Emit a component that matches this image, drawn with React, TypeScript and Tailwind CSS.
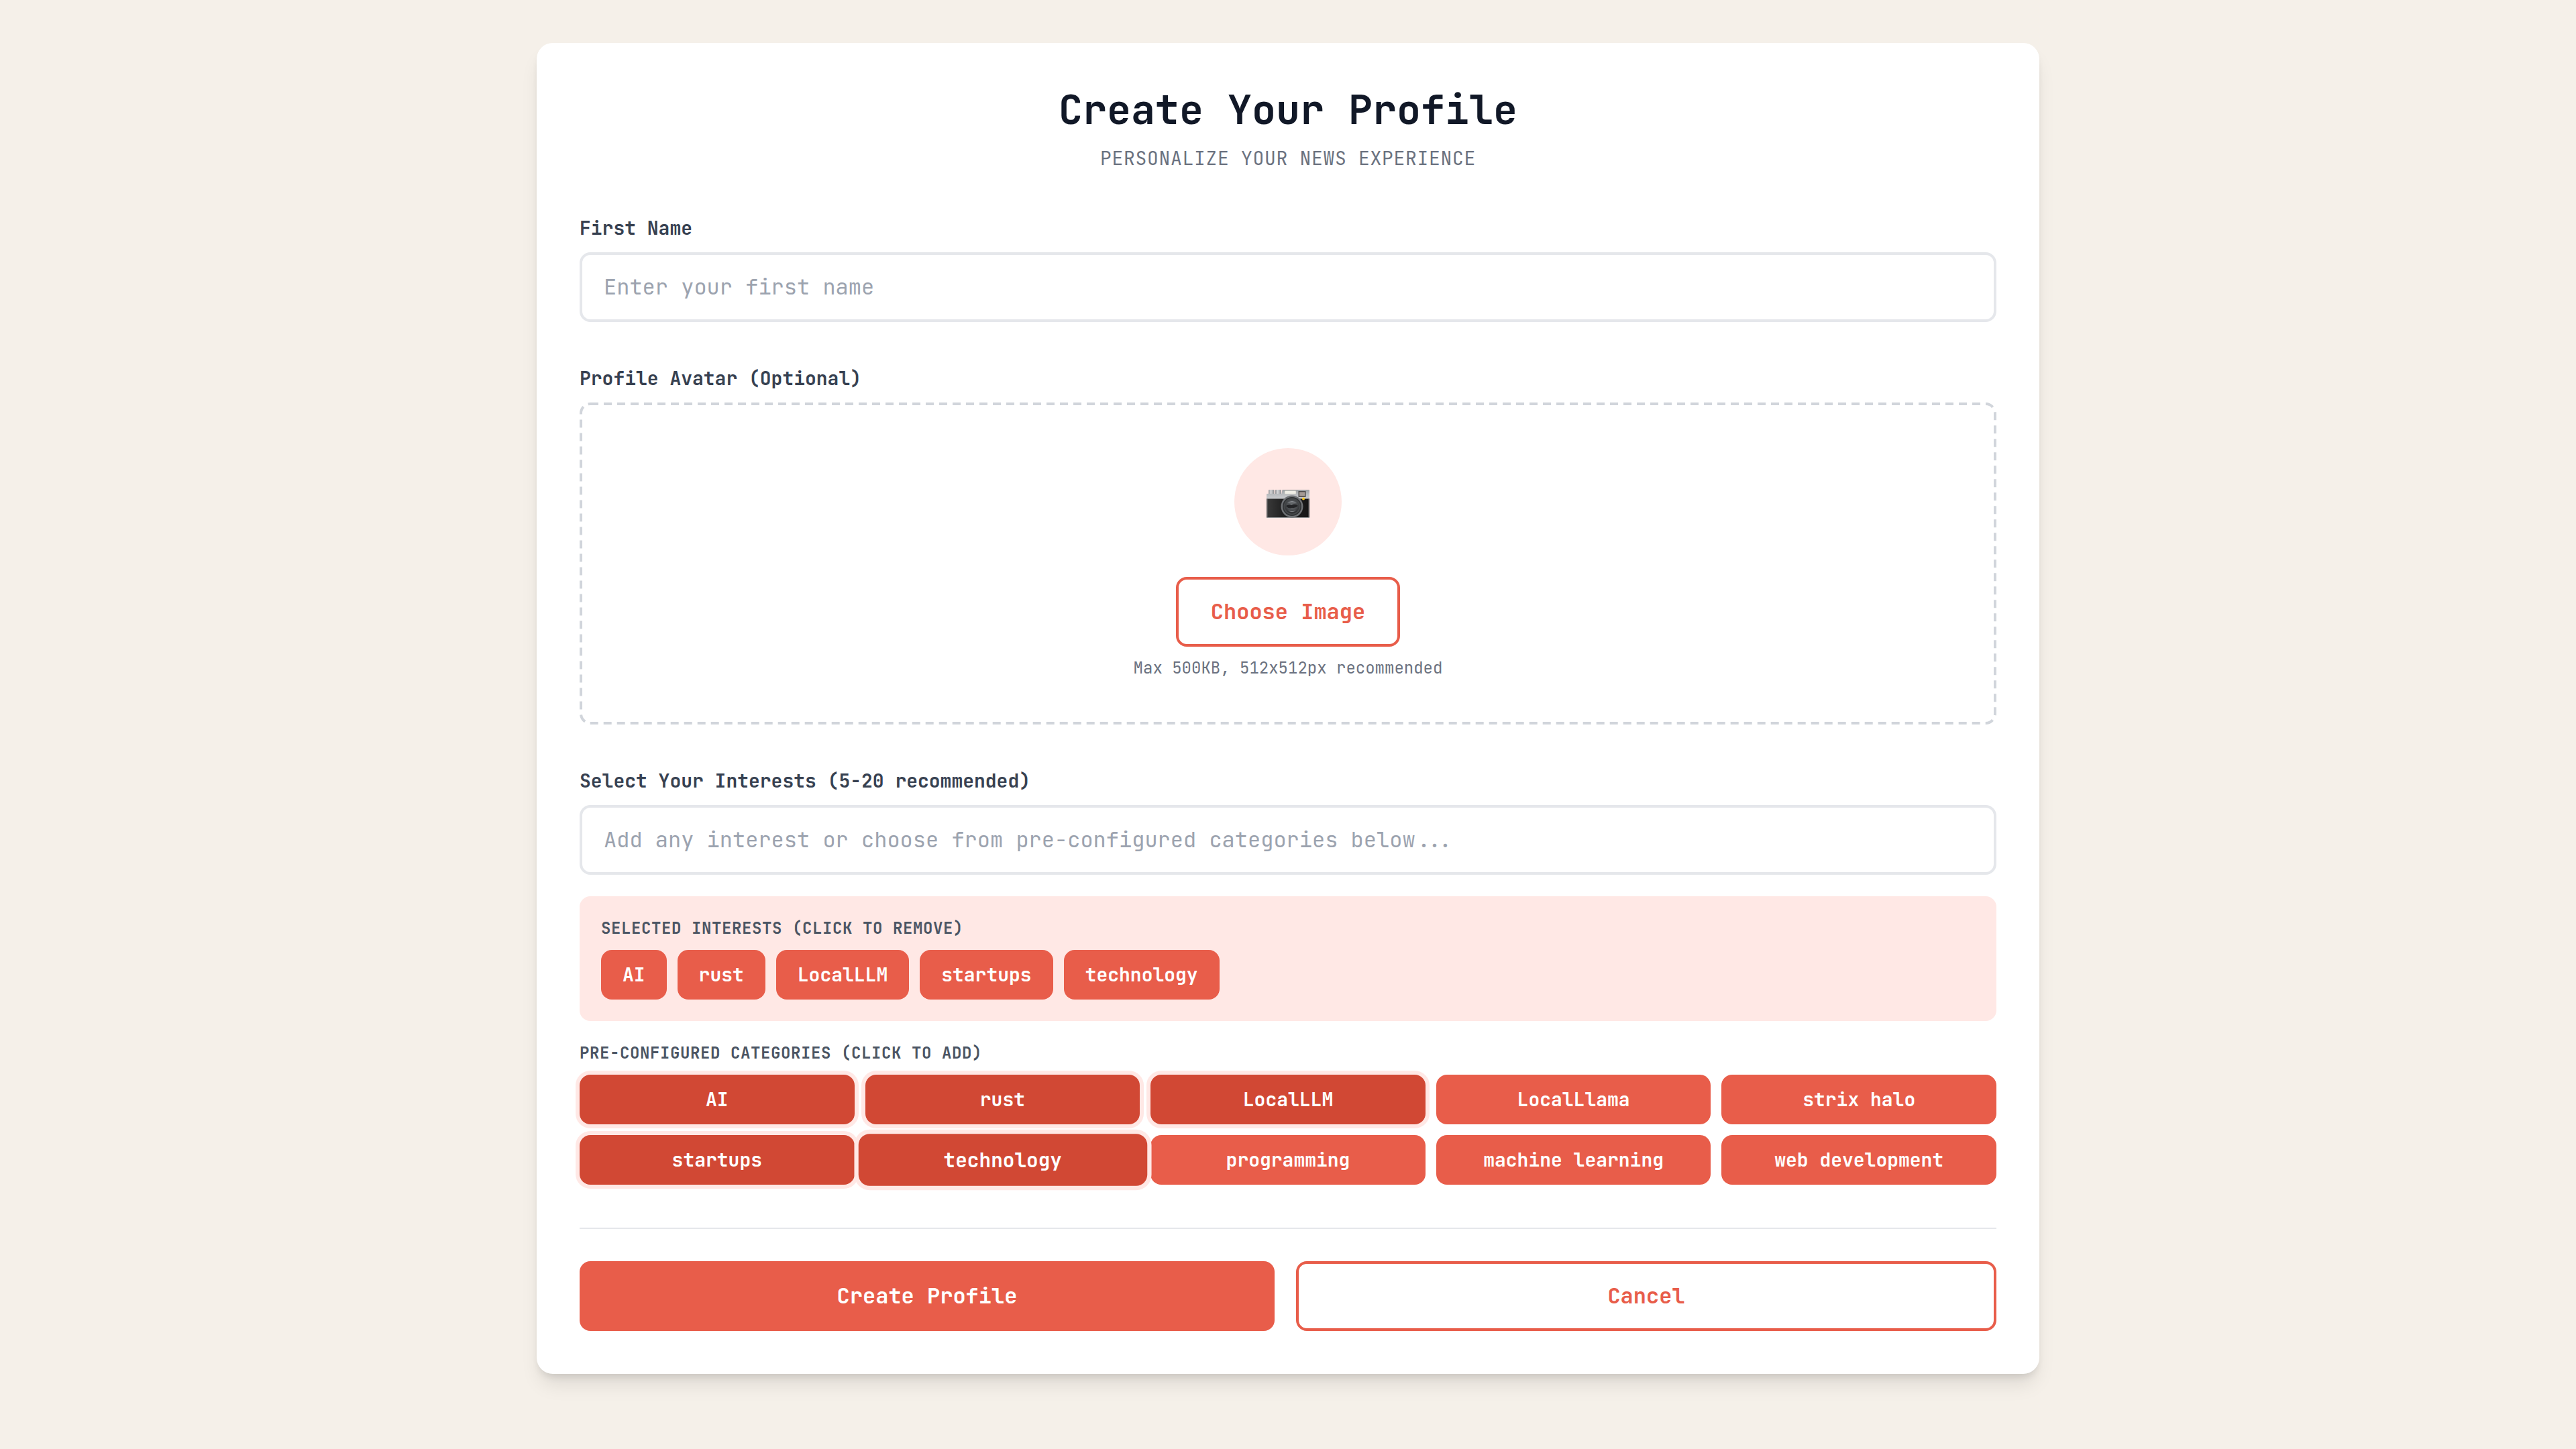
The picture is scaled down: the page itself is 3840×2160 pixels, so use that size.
import { useState } from "react";

const fieldClass =
  "w-full rounded-2xl border-4 border-[#e5e7eb] bg-white px-8 py-6 text-[32px] leading-[48px] text-[#111827] placeholder:text-[#9ca3af] outline-none";
const labelClass = "mb-4 block text-[28px] leading-[40px] font-semibold text-[#374151]";
const captionClass =
  "mb-4 text-[24px] leading-[32px] font-semibold tracking-wide text-[#4b5563] uppercase";
const outlineButtonClass =
  "rounded-2xl border-4 border-[#e85d4a] bg-white px-12 py-6 text-[32px] leading-[48px] font-semibold text-[#e85d4a]";
const tagClass =
  "rounded-2xl px-8 py-4 text-[28px] leading-[42px] font-semibold text-white";

const CATEGORIES = [
  "AI",
  "rust",
  "LocalLLM",
  "LocalLlama",
  "strix halo",
  "startups",
  "technology",
  "programming",
  "machine learning",
  "web development",
];

function CameraIcon() {
  return (
    <svg viewBox="0 0 64 64" className="size-16" aria-hidden="true">
      <defs>
        <linearGradient id="cam-top" x1="0" y1="0" x2="0" y2="1">
          <stop offset="0" stopColor="#9c9fa2" />
          <stop offset="0.5" stopColor="#b9bcbf" />
          <stop offset="1" stopColor="#cccdd0" />
        </linearGradient>
        <linearGradient id="cam-body" x1="0" y1="0" x2="1" y2="0">
          <stop offset="0" stopColor="#3a3a3a" />
          <stop offset="0.35" stopColor="#232323" />
          <stop offset="1" stopColor="#161616" />
        </linearGradient>
        <linearGradient id="cam-dial" x1="0" y1="0" x2="1" y2="0">
          <stop offset="0" stopColor="#8f9194" />
          <stop offset="0.4" stopColor="#d6d7d9" />
          <stop offset="1" stopColor="#8a8c8f" />
        </linearGradient>
        <radialGradient id="cam-lens" cx="0.5" cy="0.4" r="0.6">
          <stop offset="0" stopColor="#6d7174" />
          <stop offset="0.6" stopColor="#4a4d50" />
          <stop offset="1" stopColor="#2a2b2d" />
        </radialGradient>
      </defs>
      <rect x="3" y="14" width="8.5" height="8" rx="1" fill="url(#cam-dial)" />
      <rect x="13" y="14" width="9" height="8" rx="1" fill="url(#cam-dial)" />
      <path d="M0 21q0-1 1-1h21.5l1-6H63q1 0 1 1v13H0z" fill="url(#cam-top)" />
      <rect x="0" y="27.5" width="64" height="28.5" fill="url(#cam-body)" />
      <path d="M1 28v27M63 28v27" stroke="#7d7f81" strokeWidth="0.8" />
      <path d="M0 55.5h64" stroke="#8b8d8f" strokeWidth="1.2" />
      <rect x="27" y="15.5" width="17" height="5" rx="1.2" fill="#efeee6" stroke="#b5b4ac" strokeWidth="0.5" />
      <rect x="47.5" y="16" width="11" height="9" fill="#4f4d4c" />
      <rect x="49" y="17.5" width="8" height="6" fill="#a59b95" />
      <circle cx="38" cy="39" r="16.5" fill="#6f7275" />
      <circle cx="38" cy="39" r="14" fill="#2f3133" />
      <circle cx="38" cy="39" r="12.5" fill="#45484a" />
      <circle cx="38" cy="39" r="10.5" fill="url(#cam-lens)" />
      <path d="M29 38q5-3 8-1 6-3 10 1-4 4-9 3-5 2-9-3z" fill="#232426" />
      <path d="M31 34q7-6 14 0-7-3-14 0z" fill="#8d9195" />
      <path d="M32 45q6 4 12 0-6 2-12 0z" fill="#85898c" />
      <circle cx="55" cy="27.5" r="2" fill="#f6c521" />
    </svg>
  );
}

function DashedOutline() {
  return (
    <svg className="pointer-events-none absolute inset-0 size-full" aria-hidden="true">
      <rect
        x="2"
        y="2"
        rx="14"
        className="h-[calc(100%-4px)] w-[calc(100%-4px)]"
        fill="none"
        stroke="#d1d5db"
        strokeWidth="4"
        strokeDasharray="12 8"
      />
    </svg>
  );
}

export default function App() {
  const [selected, setSelected] = useState(["AI", "rust", "LocalLLM", "startups", "technology"]);
  const [focused, setFocused] = useState("technology");

  const toggle = (name: string) => {
    setFocused(name);
    setSelected((list) =>
      list.includes(name) ? list.filter((item) => item !== name) : [...list, name],
    );
  };

  return (
    <main className="min-h-screen bg-[#f5f0e9] p-16 font-['JetBrains_Mono','DejaVu_Sans_Mono',monospace]">
      <form
        onSubmit={(event) => event.preventDefault()}
        className="mx-auto w-full max-w-[2240px] rounded-3xl bg-white p-16 shadow-[0_20px_30px_-6px_rgb(0_0_0/0.1),0_8px_12px_-4px_rgb(0_0_0/0.1)]"
      >
        <header className="mb-16 text-center">
          <h1 className="text-[60px] leading-[72px] font-bold text-[#111827]">Create Your Profile</h1>
          <p className="mt-4 text-[28px] leading-[40px] tracking-wide text-[#6b7280] uppercase">
            Personalize your news experience
          </p>
        </header>

        <section className="mb-16">
          <label htmlFor="first-name" className={labelClass}>
            First Name
          </label>
          <input id="first-name" type="text" placeholder="Enter your first name" className={fieldClass} />
        </section>

        <section className="mb-16">
          <h2 className={labelClass}>Profile Avatar (Optional)</h2>
          <div className="relative flex flex-col items-center rounded-2xl border-4 border-transparent p-16">
            <div className="absolute -inset-1">
              <DashedOutline />
            </div>
            <div className="mb-8 flex size-40 items-center justify-center rounded-full bg-[#ffe8e5]">
              <CameraIcon />
            </div>
            <button type="button" className={outlineButtonClass}>
              Choose Image
            </button>
            <p className="mt-4 text-[24px] leading-[32px] text-[#6b7280]">Max 500KB, 512x512px recommended</p>
          </div>
        </section>

        <section className="mb-16">
          <label htmlFor="interests" className={labelClass}>
            Select Your Interests (5-20 recommended)
          </label>
          <input
            id="interests"
            type="text"
            placeholder="Add any interest or choose from pre-configured categories below..."
            className={fieldClass}
          />

          <div className="mt-8 rounded-2xl bg-[#ffe8e5] p-8">
            <h3 className={captionClass}>Selected interests (click to remove)</h3>
            <div className="flex flex-wrap gap-4">
              {selected.map((name) => (
                <button
                  key={name}
                  type="button"
                  onClick={() => toggle(name)}
                  className={`${tagClass} bg-[#e85d4a]`}
                >
                  {name}
                </button>
              ))}
            </div>
          </div>

          <div className="mt-8">
            <h3 className={captionClass}>Pre-configured categories (click to add)</h3>
            <div className="grid grid-cols-5 gap-4">
              {CATEGORIES.map((name) => (
                <button
                  key={name}
                  type="button"
                  aria-pressed={selected.includes(name)}
                  onClick={() => toggle(name)}
                  className={`${tagClass} ${
                    selected.includes(name)
                      ? "bg-[#d14834] shadow-[0_0_0_6px_#ffe8e5]"
                      : "bg-[#e85d4a]"
                  } ${focused === name ? "scale-105" : ""}`}
                >
                  {name}
                </button>
              ))}
            </div>
          </div>
        </section>

        <footer className="flex gap-8 border-t-2 border-[#e5e7eb] pt-12">
          <button
            type="submit"
            className="flex-1 rounded-2xl bg-[#e85d4a] px-12 py-6 text-[32px] leading-[48px] font-semibold text-white"
          >
            Create Profile
          </button>
          <button type="button" className={`${outlineButtonClass} flex-1`}>
            Cancel
          </button>
        </footer>
      </form>
    </main>
  );
}
